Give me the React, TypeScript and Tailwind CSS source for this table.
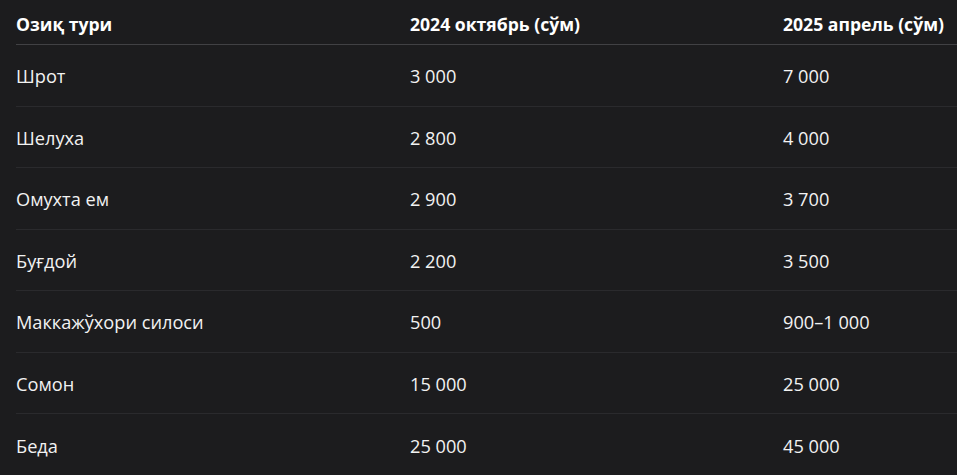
import React from "react";

const rows: [string, string, string][] = [
  ["Шрот", "3 000", "7 000"],
  ["Шелуха", "2 800", "4 000"],
  ["Омухта ем", "2 900", "3 700"],
  ["Буғдой", "2 200", "3 500"],
  ["Маккажўхори силоси", "500", "900–1 000"],
  ["Сомон", "15 000", "25 000"],
  ["Беда", "25 000", "45 000"],
];

export default function App() {
  return (
    <div
      className="w-[957px] h-[475px] overflow-hidden bg-[#1c1c1e] pl-4"
      style={{ fontFamily: '"Open Sans", "Noto Sans", sans-serif' }}
    >
      <div className="grid grid-cols-[394px_373px_1fr] h-[45px] items-center border-b border-[#414144] text-[17.6px] font-bold text-white pt-[5px]">
        <div>Озиқ тури</div>
        <div>2024 октябрь (сўм)</div>
        <div className="whitespace-nowrap">2025 апрель (сўм)</div>
      </div>
      {rows.map((r, i) => (
        <div
          key={i}
          className={
            i < rows.length - 1
              ? "grid grid-cols-[394px_373px_1fr] h-[61.5px] items-center border-b border-[#2a2a2d] text-[18.2px] text-[#f2f2f2] pt-[3px]"
              : "grid grid-cols-[394px_373px_1fr] h-[61.5px] items-center text-[18.2px] text-[#f2f2f2] pt-[3px]"
          }
        >
          <div>{r[0]}</div>
          <div>{r[1]}</div>
          <div>{r[2]}</div>
        </div>
      ))}
    </div>
  );
}
